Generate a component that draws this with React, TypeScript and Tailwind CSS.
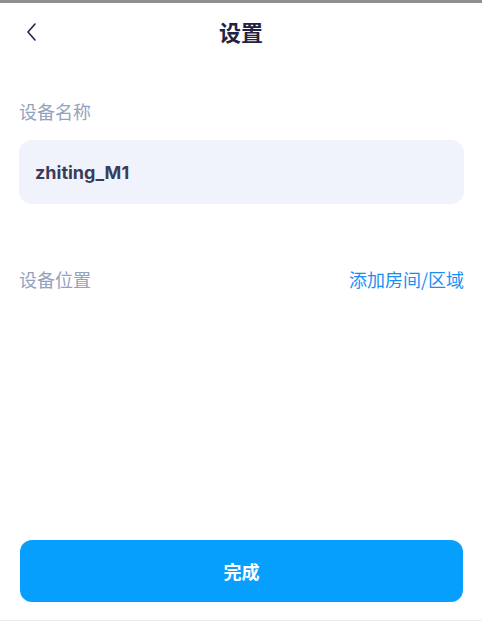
import React from "react";

export default function App() {
  const font = { fontFamily: '"Noto Sans CJK SC", "Noto Sans", sans-serif' };
  return (
    <div className="w-[482px] h-[623px] bg-white flex flex-col relative overflow-hidden" style={font}>
      <div className="h-[3px] bg-[#8f8f8f]" />
      <div className="h-[58px] flex items-center relative pl-[25px]">
        <svg width="14" height="20" viewBox="0 0 14 20">
          <path d="M10 2 L3 10 L10 18" fill="none" stroke="#1f2450" strokeWidth="1.6" strokeLinecap="round" strokeLinejoin="round" />
        </svg>
        <div className="absolute left-0 right-0 top-[16px] text-center text-[22px] font-bold text-[#1f2447] leading-[24px] pointer-events-none">设置</div>
      </div>
      <div className="pl-[19px] pr-[18px] flex flex-col">
        <div className="mt-[38px] text-[18px] leading-[24px] text-[#94a2bd]">设备名称</div>
        <div className="mt-[17px] h-[64px] rounded-[13px] bg-[#f1f3fc] flex items-center px-[16px]">
          <span className="text-[18px] font-bold text-[#3a3d5a]" style={{ fontFamily: 'Inter, "Noto Sans", sans-serif' }}>zhiting_M1</span>
        </div>
        <div className="mt-[63px] flex items-center justify-between text-[18px] leading-[24px]">
          <span className="text-[#94a2bd]">设备位置</span>
          <span className="text-[#1a90f5]">添加房间/区域</span>
        </div>
      </div>
      <div className="flex-1" />
      <div className="pl-[20px] pr-[19px] pb-[21px]">
        <div className="h-[62px] rounded-[12px] bg-[#079ffd] flex items-center justify-center text-white text-[18px] font-bold">完成</div>
      </div>
      <div className="h-[1px] bg-[#ececec] absolute bottom-[2px] left-0 right-0" />
    </div>
  );
}
